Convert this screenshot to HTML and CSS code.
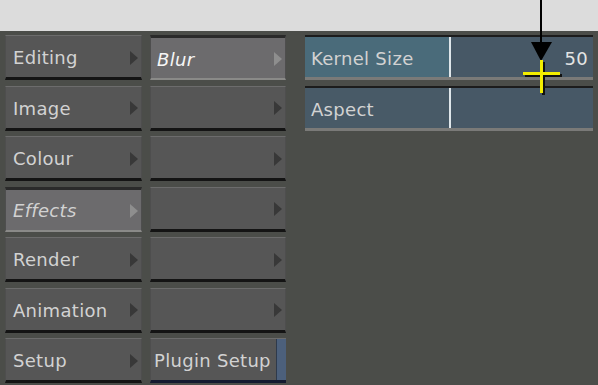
FILE: index.html
```html
<!doctype html>
<html lang="en">
<head>
<meta charset="utf-8">
<title>Effects menu</title>
<link rel="stylesheet" href="styles.css">
</head>
<body>
<div class="topbar"></div>
<div class="panel">
  <div class="col col-menu">
    <div class="btn"><span>Editing</span><i class="tri"></i></div>
    <div class="btn"><span>Image</span><i class="tri"></i></div>
    <div class="btn"><span>Colour</span><i class="tri"></i></div>
    <div class="btn active"><span class="it">Effects</span><i class="tri"></i></div>
    <div class="btn"><span>Render</span><i class="tri"></i></div>
    <div class="btn"><span>Animation</span><i class="tri"></i></div>
    <div class="btn"><span>Setup</span><i class="tri"></i></div>
  </div>
  <div class="col col-sub">
    <div class="btn active sel"><span class="it strong">Blur</span><i class="tri"></i></div>
    <div class="btn"><span></span><i class="tri"></i></div>
    <div class="btn"><span></span><i class="tri"></i></div>
    <div class="btn"><span></span><i class="tri"></i></div>
    <div class="btn"><span></span><i class="tri"></i></div>
    <div class="btn"><span></span><i class="tri"></i></div>
    <div class="btn plugin"><span>Plugin Setup</span><b class="strip"></b></div>
  </div>
  <div class="col col-params">
    <div class="param">
      <div class="label hot">Kernel Size</div>
      <div class="value">50</div>
    </div>
    <div class="param">
      <div class="label">Aspect</div>
      <div class="value"></div>
    </div>
  </div>
</div>

<!-- pointer annotation -->
<svg class="pointer" width="598" height="385" viewBox="0 0 598 385">
  <rect x="540" y="0" width="2" height="44" fill="#000"/>
  <polygon points="531,42 552,42 541,61" fill="#000"/>
  <rect x="525" y="74" width="37" height="3" fill="#111"/>
  <rect x="542" y="62" width="3" height="33" fill="#111"/>
  <rect x="523" y="72" width="37" height="3" fill="#f4ee00"/>
  <rect x="540" y="60" width="3" height="33" fill="#f4ee00"/>
</svg>
</body>
</html>
```

FILE: styles.css
```css
html,body{margin:0;padding:0;background:#4b4d49;}
body{
  width:598px;height:385px;overflow:hidden;position:relative;
  font-family:"DejaVu Sans",sans-serif;color:#d2d2d2;
}

.topbar{height:31px;background:#dcdcdc;}

.panel{
  display:flex;
  padding:4px 0 0 5px;
}

.col{display:flex;flex-direction:column;gap:5.5px;}
.col-menu{width:137px;margin-right:8px;}
.col-sub{width:136px;margin-right:19px;}
.col-params{width:288px;gap:6px;}

/* menu buttons */
.btn{
  box-sizing:border-box;
  height:45px;
  display:flex;
  align-items:center;
  justify-content:space-between;
  padding:2px 3px 0 7px;
  background:#565656;
  border-top:1px solid #6c6c6c;
  border-left:1px solid #4e4e4e;
  border-right:1px solid #4e4e4e;
  border-bottom:3px solid #141414;
  font-size:18px;
  letter-spacing:0.3px;
  white-space:nowrap;
}
.btn .tri{
  width:0;height:0;
  border-top:7px solid transparent;
  border-bottom:7px solid transparent;
  border-left:8px solid #383838;
}
.btn.active{
  background:#6c6b6d;
  border-top:3px solid #2a2a2a;
  border-bottom:2px solid #8a8a88;
}
.btn.active .tri{border-left-color:#8e8e8e;}
.btn.sel{padding-left:6px;}
.it{font-style:italic;}
.strong{color:#f6f6f6;}

.btn.plugin{padding:2px 0 0 3px;border-right:none;border-bottom-color:#151a30;}
.strip{
  align-self:stretch;
  margin-top:-2px;
  width:9px;
  background:#4c607c;
  border-left:1px solid #2e3a4c;
}

/* parameter fields */
.param{
  box-sizing:border-box;
  height:45px;
  display:flex;
  border-top:2px solid #1c1c1c;
  border-bottom:3px solid #7a7a78;
  box-shadow:inset 0 -1px 0 #33445a;
  font-size:18px;
  letter-spacing:0.3px;
}
.label{
  width:146px;
  display:flex;align-items:center;
  padding:2px 0 0 6px;
  box-sizing:border-box;
  background:#485a67;
  border-right:2px solid #dfe6ea;
}
.label.hot{background:#4a6b7a;}
.value{
  flex:1;
  display:flex;align-items:center;justify-content:flex-end;
  padding:2px 5px 0 0;
  background:#475866;
  color:#e4e4e4;
}

.pointer{position:absolute;left:0;top:0;pointer-events:none;}
```
